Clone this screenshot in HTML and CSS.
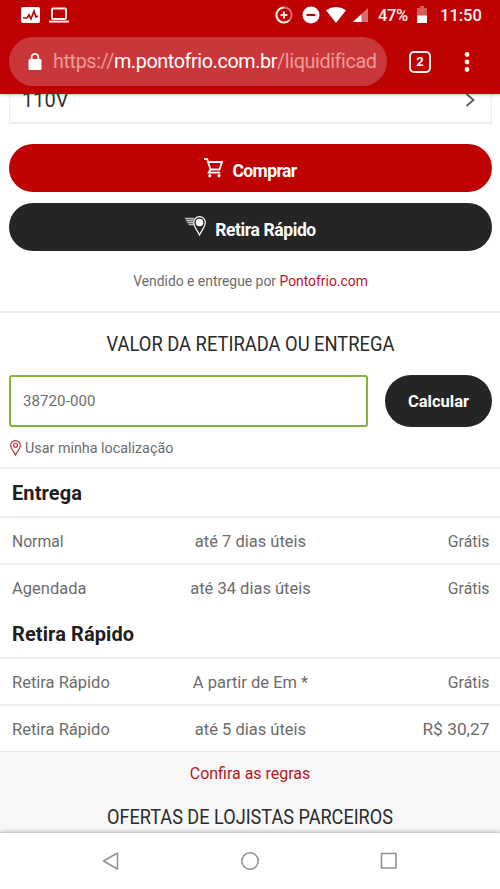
FILE: index.html
```
<!DOCTYPE html>
<html lang="pt-BR">
<head>
<meta charset="utf-8">
<meta name="viewport" content="width=device-width, initial-scale=1">
<title>Pontofrio</title>
<link rel="stylesheet" href="styles.css">
</head>
<body>
<div class="phone">
  <header class="browser">
    <div class="status">
      <svg class="s-pulse" width="19" height="16" viewBox="0 0 19 16"><rect width="19" height="16" rx="2" fill="#fff"/><path d="M2 11h4l2-3 2 4 3-8 2 6 2-1" fill="none" stroke="#b90504" stroke-width="1.7"/></svg>
      <svg class="s-laptop" width="20" height="16" viewBox="0 0 20 16" fill="none" stroke="#ffe9e6"><rect x="3" y="1.5" width="14" height="10.5" rx="1" stroke-width="1.9"/><path d="M0 14.6h20" stroke-width="2"/></svg>
      <svg class="s-saver" width="18" height="18" viewBox="0 0 18 18" fill="none" stroke="#ffe9e6" stroke-width="2"><path d="M9 1.500a7.500 7.500 0 0 1 5.500 12.600" opacity=".45"/><path d="M9 1.500a7.500 7.500 0 1 0 5.500 12.600M9 5.600v6.800M5.600 9h6.800"/></svg>
      <svg class="s-dnd" width="18" height="18" viewBox="0 0 18 18"><circle cx="9" cy="9" r="8.5" fill="#fff"/><path d="M4.500 9h9" stroke="#b90504" stroke-width="2.2"/></svg>
      <svg class="s-wifi" width="20" height="16" viewBox="0 0 20 16"><path d="M0 3.200Q10-3 20 3.200L10 16z" fill="#fff"/></svg>
      <svg class="s-signal" width="15" height="15" viewBox="0 0 15 15"><path d="M15 0v14H0z" fill="#d86d69"/><path d="M8.500 6v8H0z" fill="#fff"/></svg>
      <span class="percent">47%</span>
      <svg class="s-battery" width="10" height="18" viewBox="0 0 10 18"><path d="M3 0h4v2h3v8H0V2h3z" fill="#d65b58"/><path d="M0 9.500h10V17H0z" fill="#fff"/></svg>
      <span class="clock">11:50</span>
    </div>
    <div class="toolbar">
      <div class="omnibox">
        <svg width="14" height="18" viewBox="0 0 14 18"><rect x=".5" y="6" width="13" height="11" rx="1.5" fill="#fff"/><path d="M3.600 7V4.200a3.400 3.400 0 0 1 6.800 0V7" fill="none" stroke="#fff" stroke-width="1.7"/></svg>
        <div class="url">https://<b>m.pontofrio.com.br</b>/liquidificad</div>
      </div>
      <div class="tabs">2</div>
      <svg class="dots" width="6" height="20" viewBox="0 0 6 20" fill="#fff1ee"><circle cx="3" cy="2.500" r="2.400"/><circle cx="3" cy="10" r="2.400"/><circle cx="3" cy="17.500" r="2.400"/></svg>
    </div>
  </header>

  <main>
    <div class="select">
      <span>110V</span>
      <svg width="10" height="14" viewBox="0 0 10 14" fill="none" stroke="#555" stroke-width="1.7"><path d="M1.500 1l7 6-7 6"/></svg>
    </div>
    <section class="actions">
      <button class="btn buy">
        <svg width="19" height="20" viewBox="0 0 19 20" fill="none" stroke="#fff" stroke-width="1.8"><path d="M0 1.200h3.200l3.300 10.300h9L18 4H4.200M6.500 11.500l-1.800 3.200h11.600"/><circle cx="5.800" cy="17.800" r="1.200" fill="#fff" stroke-width="1"/><circle cx="15" cy="17.800" r="1.200" fill="#fff" stroke-width="1"/></svg>
        <span>Comprar</span>
      </button>
      <button class="btn pickup">
        <svg width="22" height="20" viewBox="0 0 22 20" fill="none" stroke="#fff"><path d="M0 2.500h9M1 4.500h7.500M2.300 6.500h5.800M3.600 8.500h5" stroke="#bbb" stroke-width="1.300"/><path d="M14.500 19C12.800 15.300 8.700 10.600 8.700 6.500a5.800 5.800 0 0 1 11.600 0c0 4.100-4.100 8.800-5.800 12.500z" stroke-width="1.200"/><circle cx="14.500" cy="6.500" r="3.800" fill="#fff" stroke="none"/></svg>
        <span>Retira Rápido</span>
      </button>
      <p class="seller">Vendido e entregue por <a>Pontofrio.com</a></p>
    </section>
    <section class="shipping">
      <h2 class="valor">VALOR DA RETIRADA OU ENTREGA</h2>
      <div class="cep">
        <div class="field">38720-000</div>
        <button class="calc">Calcular</button>
      </div>
      <div class="locate">
        <svg width="11" height="16" viewBox="0 0 11 16" fill="none" stroke="#c02631" stroke-width="1.1"><path d="M5.500 15C4.200 12 .7 8.800.7 5.400a4.800 4.800 0 0 1 9.600 0C10.300 8.800 6.800 12 5.500 15z"/><circle cx="5.500" cy="5.300" r="2"/></svg>
        <span>Usar minha localização</span>
      </div>
    </section>
    <section class="rates">
      <h3>Entrega</h3>
      <div class="row"><span class="normal">Normal</span><span>até 7 dias úteis</span><span>Grátis</span></div>
      <div class="row"><span>Agendada</span><span>até 34 dias úteis</span><span>Grátis</span></div>
      <h3>Retira Rápido</h3>
      <div class="row"><span>Retira Rápido</span><span>A partir de Em *</span><span>Grátis</span></div>
      <div class="row"><span>Retira Rápido</span><span>até 5 dias úteis</span><span class="price">R$ 30,27</span></div>
    </section>
    <section class="partners">
      <a>Confira as regras</a>
      <h2>OFERTAS DE LOJISTAS PARCEIROS</h2>
    </section>
  </main>

  <nav class="system">
    <svg width="18" height="20" viewBox="0 0 18 20"><path d="M15.500 2v16L1.500 10z"/></svg>
    <svg width="20" height="20" viewBox="0 0 20 20"><circle cx="10" cy="10" r="8.200"/></svg>
    <svg width="18" height="20" viewBox="0 0 18 20"><rect x="1.500" y="2.500" width="14.500" height="14.500"/></svg>
  </nav>
</div>
</body>
</html>
```
FILE: styles.css
```
* { box-sizing: border-box; }
body { margin: 0; font-family: Roboto, "Noto Sans", sans-serif; color: #6c6c6c; background: #fff; }
svg { display: block; flex: none; }
h2, h3, p { margin: 0; font-weight: 400; }
button { border: 0; padding: 0; font-family: inherit; color: #fff; }
.phone { width: 500px; height: 889px; overflow: hidden; display: flex; flex-direction: column; }

.browser { position: relative; z-index: 1; flex: none; height: 94px; background: #be0204; box-shadow: 0 1px 3px rgba(0,0,0,.25); }
.status { display: flex; align-items: center; height: 30px; padding-left: 21px; color: #fff0ed; font-size: 16.5px; font-weight: 500; white-space: nowrap; }
.s-laptop { margin-left: 9px; }
.s-saver { margin-left: 206px; }
.s-dnd { margin-left: 9px; }
.s-wifi { margin-left: 6px; }
.s-signal { margin-left: 7px; }
.percent { width: 31px; margin-left: 10px; letter-spacing: -.4px; }
.s-battery { margin-left: 8px; }
.clock { margin-left: 13px; }
.toolbar { display: flex; align-items: center; margin-top: 7px; padding-left: 9px; }
.omnibox { display: flex; align-items: center; width: 378px; height: 49px; padding-left: 19px; border-radius: 25px; background: #c9373a; }
.url { width: 325px; margin-left: 11px; white-space: nowrap; font-size: 19.8px; letter-spacing: -.4px; color: #f19b98; }
.url b { color: #fff; font-weight: 400; }
.tabs { width: 22px; height: 22px; margin-left: 22px; border: 2px solid #fff0ed; border-radius: 5px; color: #fff; font-size: 13px; font-weight: 700; line-height: 18px; text-align: center; }
.dots { margin-left: 33px; }

main { flex: 1; min-height: 0; overflow: hidden; }
.select { display: flex; justify-content: space-between; align-items: flex-start; height: 35px; margin: -5px 8px 0 9px; padding: 0 16px 0 12px; border: 2px solid #ededed; border-width: 0 1px 2px; color: #333; font-size: 20px; line-height: 22px; }
.select svg { margin-top: 4px; }
.actions { height: 189px; padding: 20px 8px 0 9px; border-bottom: 2px solid #ededed; }
.btn { display: flex; align-items: center; justify-content: center; width: 483px; height: 48px; border-radius: 24px; font-size: 17.5px; font-weight: 700; }
.btn span { padding-top: 5px; letter-spacing: -.4px; }
.buy { gap: 9px; background: #be0204; }
.buy span { letter-spacing: -.6px; }
.pickup { gap: 8px; margin-top: 11px; background: #252525; }
.pickup svg { margin-top: -2px; }
.seller { margin-top: 21px; font-size: 14.5px; line-height: 20px; text-align: center; transform: scaleX(.957); }
a { color: #b7141f; }
.shipping { height: 156px; padding: 19px 8px 0 9px; border-bottom: 2px solid #ededed; }
h2 { color: #2a2a2a; font-size: 20px; line-height: 24px; text-align: center; white-space: nowrap; transform: scaleX(.917); }
.cep { display: flex; justify-content: space-between; height: 52px; margin-top: 19px; }
.field { width: 359px; padding-left: 12px; border: 2px solid #7fb53b; border-radius: 3px; font-size: 15px; letter-spacing: .1px; line-height: 49px; }
.calc { width: 107px; border-radius: 26px; background: #252525; font-size: 16.5px; font-weight: 700; }
.locate { display: flex; align-items: center; gap: 4px; margin-top: 11px; padding-left: 1px; font-size: 15px; line-height: 20px; }
.locate span { transform: scaleX(.955); transform-origin: left; }
h3 { height: 47px; padding-left: 12px; color: #202020; font-size: 20px; letter-spacing: .1px; font-weight: 700; line-height: 48px; }
.row { display: grid; grid-template-columns: 1fr 160px 1fr; height: 47px; padding: 0 11px 0 12px; border-top: 2px solid #ededed; font-size: 16.5px; line-height: 47px; white-space: nowrap; }
.row .normal { transform: scaleX(.95); transform-origin: left; }
.row span:nth-child(2) { text-align: center; }
.row span:nth-child(3) { text-align: right; transform: scaleX(.96); transform-origin: right; }
.row span.price:nth-child(3) { transform: scaleX(1.05); }
.partners { height: 90px; padding-top: 10px; border-top: 1px solid #e9e9e9; background: #f7f7f7; text-align: center; }
.partners a { display: block; font-size: 16.5px; line-height: 24px; transform: scaleX(.967); }
.partners h2 { margin-top: 19px; transform: scaleX(.905); }

.system { position: relative; flex: none; display: flex; justify-content: space-between; height: 56px; padding: 18px 102px 0 102px; background: #fff; box-shadow: 0 -1px 4px rgba(0,0,0,.3); }
.system svg { fill: none; stroke: #929292; stroke-width: 1.6; stroke-linejoin: round; }
```
